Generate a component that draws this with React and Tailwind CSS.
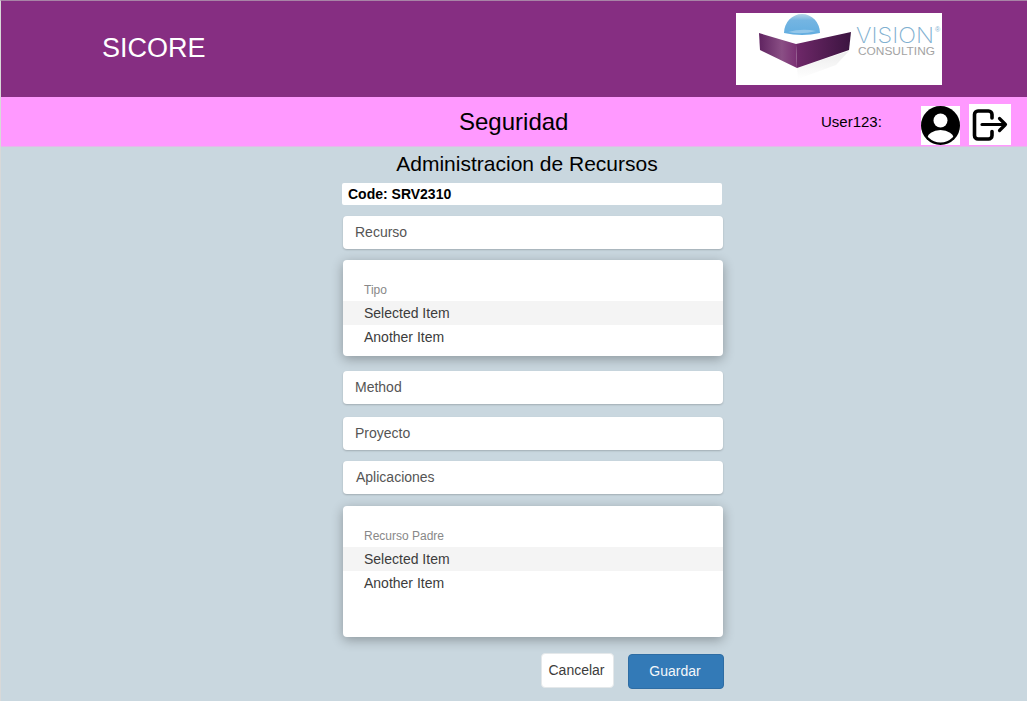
const sans = { fontFamily: '"Liberation Sans", Arial, sans-serif' };

function Logo() {
  return (
    <div className="w-[206px] h-[72px] bg-white shrink-0">
      <svg width="206" height="72" viewBox="0 0 206 72">
        <defs>
          <linearGradient id="left" x1="0" x2="1" y1="0" y2="0">
            <stop offset="0" stopColor="#5f2360" />
            <stop offset="0.6" stopColor="#8a4f85" />
            <stop offset="1" stopColor="#7a2f73" />
          </linearGradient>
          <linearGradient id="right" x1="0" x2="1" y1="0" y2="0">
            <stop offset="0" stopColor="#6f2869" />
            <stop offset="1" stopColor="#3b1440" />
          </linearGradient>
          <linearGradient id="dome" x1="0" x2="0" y1="0" y2="1">
            <stop offset="0" stopColor="#b5d5e6" />
            <stop offset="0.3" stopColor="#74b5e2" />
            <stop offset="1" stopColor="#62ade0" />
          </linearGradient>
          <linearGradient id="shadow" x1="0" x2="0" y1="0" y2="1">
            <stop offset="0" stopColor="#e0e0e0" />
            <stop offset="1" stopColor="#ffffff" />
          </linearGradient>
        </defs>
        <path d="M61 55 L113 38 L100 52 L62 66 Z" fill="url(#shadow)" opacity="0.6" />
        <path d="M23 20 L60 31 L61 55 L24 37 Z" fill="url(#left)" />
        <path d="M60 31 L115 19 L113 37 L61 55 Z" fill="url(#right)" />
        <path d="M48 20 A18 19 0 0 1 84 20 Q66 24 48 20 Z" fill="url(#dome)" />
        <path d="M52 19 Q66 22 80 18 Q66 15 52 19 Z" fill="#a8d2ee" opacity="0.7" />
        <text x="120" y="30" fontFamily="Inter" fontWeight="200" fontSize="22" fill="#7fb0d0" textLength="78" lengthAdjust="spacingAndGlyphs">VISION</text>
        <text x="199" y="19" fontFamily="Liberation Sans" fontSize="7" fill="#7fb0d0">®</text>
        <text x="122" y="42" fontFamily="Liberation Sans" fontSize="10" fill="#a3a3a3" textLength="77" lengthAdjust="spacingAndGlyphs">CONSULTING</text>
      </svg>
    </div>
  );
}

function Field({ label, className = "" }) {
  return (
    <div className={`w-[380px] h-[33px] bg-white rounded-[4px] shadow-[0_1px_2px_rgba(0,0,0,0.2)] flex items-center pl-3 text-[14px] text-[#555] ${className}`}>
      {label}
    </div>
  );
}

function ListBox({ label, className = "" }) {
  return (
    <div className={`w-[380px] bg-white rounded-[4px] shadow-[0_3px_12px_rgba(0,0,0,0.3)] pt-[21px] text-[14px] text-[#3c3c3c] ${className}`}>
      <div className="px-[21px] h-[20px] pb-[2px] flex items-center text-[12px] text-[#888]">{label}</div>
      <div className="px-[21px] h-[24px] flex items-center bg-[#f4f4f4]">Selected Item</div>
      <div className="px-[21px] h-[24px] flex items-center">Another Item</div>
    </div>
  );
}

export default function App() {
  return (
    <div style={sans} className="w-[1027px] h-[701px] overflow-hidden bg-[#c9d7df] border-l border-l-[#d8d8d8] border-t border-t-[#a884a6] flex flex-col">
      {/* Header */}
      <div className="h-[96px] shrink-0 bg-[#862e82] flex items-center">
        <div className="w-[735px] pl-[101px] pb-[2px] text-[27px] text-white shrink-0">SICORE</div>
        <Logo />
      </div>

      {/* Sub header */}
      <div className="h-[50px] shrink-0 bg-[#ff99ff] flex items-center border-b border-b-[#e5b8ea]">
        <div className="w-[820px] shrink-0 pl-[458px] text-[24px] text-black">Seguridad</div>
        <div className="w-[100px] shrink-0 pt-[2px] text-[15px] text-black">User123:</div>
        <div className="w-[39px] h-[39px] bg-white shrink-0 self-start mt-[9px]">
          <svg width="39" height="39" viewBox="0 0 39 39">
            <defs>
              <clipPath id="avatar">
                <circle cx="19.5" cy="19.5" r="17" />
              </clipPath>
            </defs>
            <circle cx="19.5" cy="19.5" r="19.5" fill="#000" />
            <circle cx="19.5" cy="14.5" r="7" fill="#fff" />
            <ellipse cx="19.5" cy="33" rx="13.5" ry="9" fill="#fff" clipPath="url(#avatar)" />
          </svg>
        </div>
        <div className="w-[42px] h-[41px] bg-white shrink-0 self-start ml-[9px] mt-[7px]">
          <svg width="42" height="41" viewBox="0 0 42 41" fill="none" stroke="#000" strokeLinecap="round" strokeLinejoin="round">
            <path strokeWidth="3.6" d="M23 14 V10.5 A3.5 3.5 0 0 0 19.5 7 H9 A3.5 3.5 0 0 0 5.5 10.5 V31.5 A3.5 3.5 0 0 0 9 35 H19.5 A3.5 3.5 0 0 0 23 31.5 V27.5" />
            <path strokeWidth="3.2" d="M13 20.5 H36.5 M30.5 14.5 L36.5 20.5 L30.5 26.5" />
          </svg>
        </div>
      </div>

      {/* Form */}
      <div className="flex flex-col pl-[341px]">
        <div className="w-[370px] h-[25px] mt-[4px] text-center text-[21px] leading-[25px] text-black">Administracion de Recursos</div>
        <div className="w-[380px] h-[22px] mt-[7px] bg-white rounded-[2px] pl-[6px] flex items-center text-[14px] font-bold text-black">Code: SRV2310</div>
        <div className="flex flex-col pl-px">
          <Field label="Recurso" className="mt-[11px]" />
          <ListBox label="Tipo" className="mt-[11px] h-[96px]" />
          <Field label="Method" className="mt-[15px]" />
          <Field label="Proyecto" className="mt-[13px]" />
          <Field label="Aplicaciones" className="mt-[11px] pl-[13px]" />
          <ListBox label="Recurso Padre" className="mt-[12px] h-[131px]" />
          <div className="w-[381px] mt-[16px] flex justify-end items-start gap-[14px] text-[14px]">
            <button className="w-[73px] h-[35px] pr-[2px] bg-white rounded-[4px] border border-[#e4e8ea] text-[#3c3c3c]">Cancelar</button>
            <button className="w-[96px] h-[35px] mt-px pr-[2px] bg-[#337ab7] rounded-[4px] border border-[#2e6da4] text-[#f4f7fa]">Guardar</button>
          </div>
        </div>
      </div>
    </div>
  );
}
